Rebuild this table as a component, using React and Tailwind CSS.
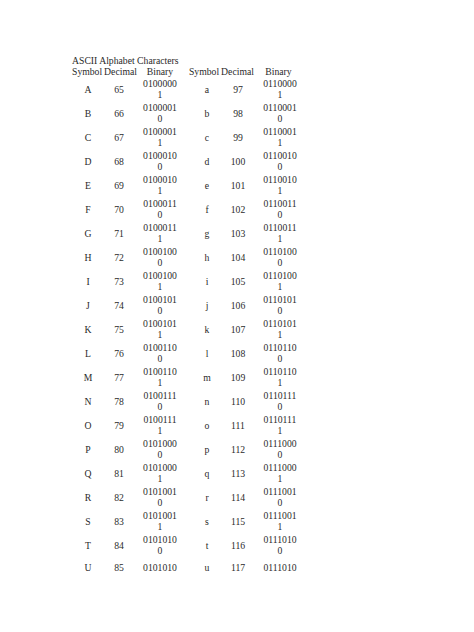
import React from "react";

const upper = "ABCDEFGHIJKLMNOPQRSTU".split("");

// 8-bit binary, split after the 7th digit like the narrow table cell wraps it
function bin(n) {
  return n.toString(2).padStart(8, "0");
}

const rows = upper.map((ch, i) => ({
  up: ch,
  upCode: 65 + i,
  low: ch.toLowerCase(),
  lowCode: 97 + i,
}));

const cols = "grid grid-cols-[36px_26px_56px_38px_24px_60px]";

function Cell({ className = "", children }) {
  return (
    <div className={"flex items-center justify-center whitespace-nowrap " + className}>
      {children}
    </div>
  );
}

function Binary({ code, cut }) {
  const b = bin(code);
  return (
    <div className="flex flex-col items-center leading-[11px]">
      <span>{b.slice(0, 7)}</span>
      {!cut && <span>{b.slice(7)}</span>}
    </div>
  );
}

export default function App() {
  return (
    <div className="w-[474px] h-[632px] bg-white text-[#2a2a2a] font-['Liberation_Serif',serif] text-[9.7px] leading-[11px]">
      <div className="pt-[55px] pl-[72px]">
        <div>ASCII Alphabet Characters</div>
        <div className={cols + " -ml-[2px]"}>
          <Cell className="!justify-start pl-[2px]">Symbol</Cell>
          <Cell className="ml-[3px]">Decimal</Cell>
          <Cell>Binary</Cell>
          <Cell className="mr-[6px]">Symbol</Cell>
          <Cell className="mr-[1px]">Decimal</Cell>
          <Cell className="mr-[3px]">Binary</Cell>
        </div>
        <div className="flex flex-col -ml-[2px]">
          {rows.map((r, i) => {
            const last = i === rows.length - 1;
            const one = last ? "h-[11px]" : "";
            return (
              <div
                key={r.up}
                className={cols + " " + (last ? "h-[18px] pt-[5px] items-start" : "h-[24px]")}
              >
                <Cell className={one}>{r.up}</Cell>
                <Cell className={one}>{r.upCode}</Cell>
                <Cell>
                  <Binary code={r.upCode} cut={last} />
                </Cell>
                <Cell className={one}>{r.low}</Cell>
                <Cell className={one}>{r.lowCode}</Cell>
                <Cell>
                  <Binary code={r.lowCode} cut={last} />
                </Cell>
              </div>
            );
          })}
        </div>
      </div>
    </div>
  );
}
